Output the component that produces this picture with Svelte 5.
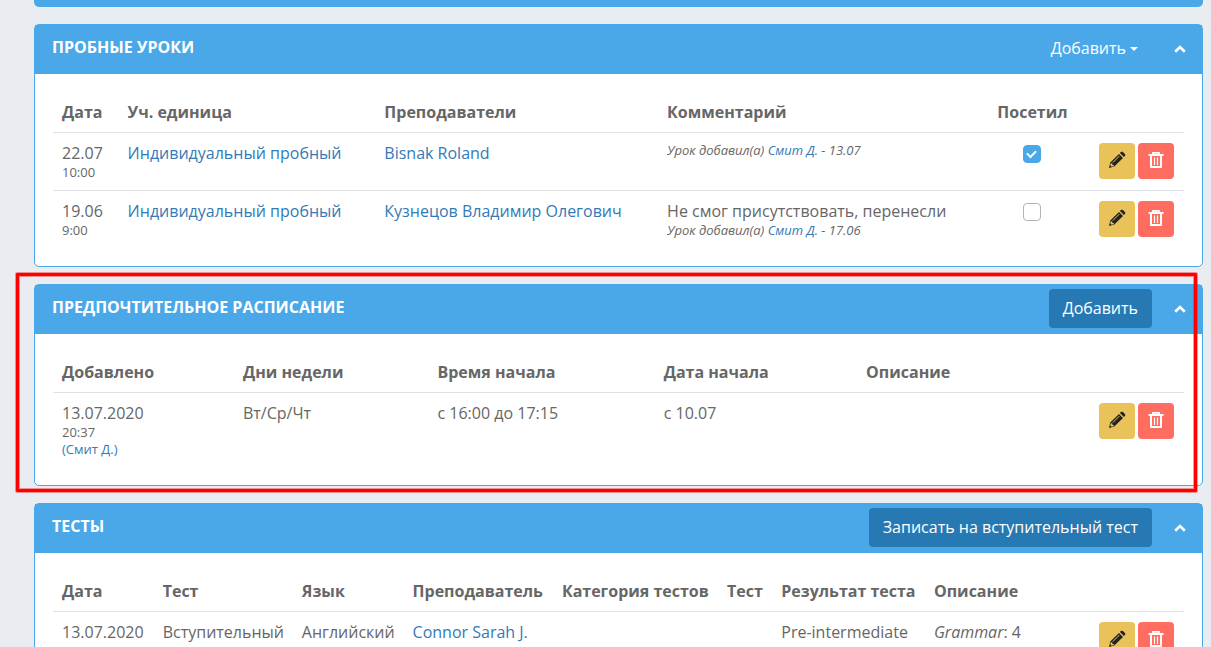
<script>
  // w is the column's share of the table, in percent
  const lessonCols = [
    { name: 'Дата', w: 5.8 },
    { name: 'Уч. единица', w: 22.7 },
    { name: 'Преподаватели', w: 25 },
    { name: 'Комментарий', w: 29.2 },
    { name: 'Посетил', w: 7.7, center: true },
  ];

  const scheduleCols = [
    { name: 'Добавлено', w: 16 },
    { name: 'Дни недели', w: 17.2 },
    { name: 'Время начала', w: 20 },
    { name: 'Дата начала', w: 17.9 },
    { name: 'Описание', w: 18 },
  ];

  const testCols = [
    { name: 'Дата', w: 8.9 },
    { name: 'Тест', w: 12.3 },
    { name: 'Язык', w: 9.8 },
    { name: 'Преподаватель', w: 13.2 },
    { name: 'Категория тестов', w: 14.6 },
    { name: 'Тест', w: 4.8 },
    { name: 'Результат теста', w: 13.5 },
    { name: 'Описание', w: 13 },
  ];

  let lessons = $state([
    { date: '22.07', time: '10:00', unit: 'Индивидуальный пробный', teacher: 'Bisnak Roland', comment: '', added: '13.07', visited: true },
    { date: '19.06', time: '9:00', unit: 'Индивидуальный пробный', teacher: 'Кузнецов Владимир Олегович', comment: 'Не смог присутствовать, перенесли', added: '17.06', visited: false },
  ]);

  const schedule = [
    { date: '13.07.2020', time: '20:37', author: 'Смит Д.', days: 'Вт/Ср/Чт', hours: 'с 16:00 до 17:15', start: 'с 10.07', note: '' },
  ];

  const tests = [
    { date: '13.07.2020', kind: 'Вступительный', lang: 'Английский', teacher: 'Connor Sarah J.', category: '', test: '', result: 'Pre-intermediate', label: 'Grammar', score: 4 },
  ];

  let open = $state({ lessons: true, schedule: true, tests: true });
</script>

{#snippet toggle(key)}
  <button class="toggle" class:closed={!open[key]} aria-label="Свернуть" onclick={() => (open[key] = !open[key])}>
    <svg width="12" height="8" viewBox="0 0 12 8"><path d="M1.2 6.700 6 2l4.800 4.700" fill="none" stroke="#fff" stroke-width="2.600" /></svg>
  </button>
{/snippet}

{#snippet head(cols)}
  <thead>
    <tr>
      {#each cols as col}
        <th class:center={col.center} style:width="{col.w}%">{col.name}</th>
      {/each}
      <th></th>
    </tr>
  </thead>
{/snippet}

{#snippet actions()}
  <div class="actions">
    <button class="edit" aria-label="Изменить">
      <svg width="18" height="18" viewBox="0 0 18 18">
        <path d="M1 17l1.300-5.400L11 3l4 4-8.700 8.600z" fill="#222" />
        <path d="M11.900 2.100l1-1c.6-.6 1.400-.6 2 0l2 2c.6.6.6 1.400 0 2l-1 1z" fill="#222" />
        <path d="M4.800 11.600l6.500-6.500" stroke="#e9c35a" stroke-width="1" />
        <path d="M2.500 13.300l.4-1 1.300.2.300 1.400 1.300.2.100 1-2.200.6-1.500-1.400z" fill="#e9c35a" />
      </svg>
    </button>
    <button class="remove" aria-label="Удалить">
      <svg width="16" height="18" viewBox="0 0 16 18" fill="none" stroke="#fff">
        <path d="M.5 4h15" stroke-width="2" />
        <path d="M5 3.500V1.800h6v1.700" stroke-width="1.800" />
        <path d="M3 4.500V16h10V4.500" stroke-width="2" stroke-linejoin="round" />
        <path d="M6.500 6.500v7.500M9.500 6.500v7.500" stroke-width="1.200" />
      </svg>
    </button>
  </div>
{/snippet}

<main>
  <div class="card-tail"></div>

  <section class="card">
    <header>
      <h2>Пробные уроки</h2>
      <button class="add plain">Добавить<span class="caret"></span></button>
      {@render toggle('lessons')}
    </header>
    {#if open.lessons}
      <div class="body">
        <table>
          {@render head(lessonCols)}
          <tbody>
            {#each lessons as row}
              <tr>
                <td>{row.date}<small>{row.time}</small></td>
                <td><a href="#unit">{row.unit}</a></td>
                <td><a href="#teacher">{row.teacher}</a></td>
                <td>{row.comment}<small class="note">Урок добавил(а) <a href="#author">Смит Д.</a> - {row.added}</small></td>
                <td class="center"><input type="checkbox" aria-label="Посетил" bind:checked={row.visited} /></td>
                <td class="tools">{@render actions()}</td>
              </tr>
            {/each}
          </tbody>
        </table>
      </div>
    {/if}
  </section>

  <section class="card marked">
    <header>
      <h2>Предпочтительное расписание</h2>
      <button class="add">Добавить</button>
      {@render toggle('schedule')}
    </header>
    {#if open.schedule}
      <div class="body">
        <table>
          {@render head(scheduleCols)}
          <tbody>
            {#each schedule as row}
              <tr>
                <td>{row.date}<small>{row.time}</small><small><a href="#author">({row.author})</a></small></td>
                <td>{row.days}</td>
                <td>{row.hours}</td>
                <td>{row.start}</td>
                <td>{row.note}</td>
                <td class="tools">{@render actions()}</td>
              </tr>
            {/each}
          </tbody>
        </table>
      </div>
    {/if}
  </section>

  <section class="card">
    <header>
      <h2>Тесты</h2>
      <button class="add">Записать на вступительный тест</button>
      {@render toggle('tests')}
    </header>
    {#if open.tests}
      <div class="body">
        <table>
          {@render head(testCols)}
          <tbody>
            {#each tests as row}
              <tr>
                <td>{row.date}</td>
                <td>{row.kind}</td>
                <td>{row.lang}</td>
                <td><a href="#teacher">{row.teacher}</a></td>
                <td>{row.category}</td>
                <td>{row.test}</td>
                <td>{row.result}</td>
                <td><i>{row.label}</i>: {row.score}</td>
                <td class="tools">{@render actions()}</td>
              </tr>
            {/each}
          </tbody>
        </table>
      </div>
    {/if}
  </section>
</main>

<style>
  :global(body) {
    margin: 0;
    background: #e9ecf1;
  }

  main {
    box-sizing: border-box;
    height: 100vh;
    overflow: hidden;
    padding: 0 8px 0 34px;
    font: 16px/22px "Open Sans", sans-serif;
    color: #666;
  }

  .card-tail {
    height: 7px;
    background: #4aa8e9;
    border-radius: 0 0 5px 5px;
  }

  .card {
    position: relative;
    margin-top: 17px;
    background: #fff;
    border: 1px solid #4aa8e9;
    border-radius: 5px;
  }

  /* red frame over the highlighted section */
  .marked::after {
    content: '';
    position: absolute;
    top: -12px;
    right: 5px;
    bottom: -7px;
    left: -19px;
    border: 3px solid #fe0000;
    border-radius: 1px;
    box-shadow: 0 0 0 1px rgba(254, 0, 0, 0.4), inset 0 0 0 1px rgba(254, 0, 0, 0.4);
    pointer-events: none;
  }

  header {
    display: flex;
    align-items: flex-start;
    padding: 4px 4px 6px 17px;
    background: #4aa8e9;
    color: #fff;
  }

  h2 {
    margin: 0 auto 0 0;
    font-size: 16px;
    line-height: 36px;
    font-weight: 700;
    text-transform: uppercase;
  }

  button {
    padding: 0;
    border: none;
    cursor: pointer;
    font: inherit;
  }

  .add {
    height: 39px;
    padding: 0 14px 2px;
    border-radius: 4px;
    background: #2779b4;
    color: #fff;
  }

  .add.plain {
    background: none;
  }

  .caret {
    display: inline-block;
    margin-left: 4px;
    vertical-align: 3px;
    border: 4px solid transparent;
    border-top-color: #fff;
    border-bottom: 0;
  }

  .toggle {
    display: flex;
    align-items: center;
    justify-content: center;
    width: 36px;
    height: 39px;
    margin-left: 10px;
    background: none;
  }

  .toggle.closed {
    transform: rotate(180deg);
  }

  .body {
    padding: 18px;
  }

  table {
    width: 100%;
    table-layout: fixed;
    border-collapse: separate;
    border-spacing: 0;
  }

  th,
  td {
    box-sizing: border-box;
    padding: 9px;
    text-align: left;
    vertical-align: top;
    white-space: nowrap;
  }

  th {
    font-weight: 700;
  }

  td {
    border-top: 1px solid #dee2e6;
  }

  .center {
    text-align: center;
  }

  small {
    display: block;
    font-size: 13px;
    line-height: 17px;
  }

  .note {
    font-style: italic;
  }

  a {
    color: #337ab7;
    text-decoration: none;
  }

  input {
    appearance: none;
    display: block;
    box-sizing: border-box;
    width: 18px;
    height: 18px;
    margin: 3px auto 0;
    border: 1px solid #adb5bd;
    border-radius: 4px;
    background: #fff;
  }

  input:checked {
    border-color: #4aa8e9;
    background: #4aa8e9;
  }

  input:checked::after {
    content: '';
    display: block;
    box-sizing: border-box;
    width: 9px;
    height: 6px;
    margin: 4px auto 0;
    border: solid #fff;
    border-width: 0 0 2px 2px;
    transform: rotate(-45deg);
  }

  td.tools {
    padding: 10px 10px 0;
  }

  .actions {
    display: flex;
    justify-content: flex-end;
    gap: 3px;
  }

  .actions button {
    display: flex;
    flex: none;
    align-items: center;
    justify-content: center;
    width: 36px;
    height: 36px;
    padding-bottom: 2px;
    border-radius: 4px;
  }

  .edit {
    background: #e9c35a;
  }

  .remove {
    background: #ff6d60;
  }
</style>
